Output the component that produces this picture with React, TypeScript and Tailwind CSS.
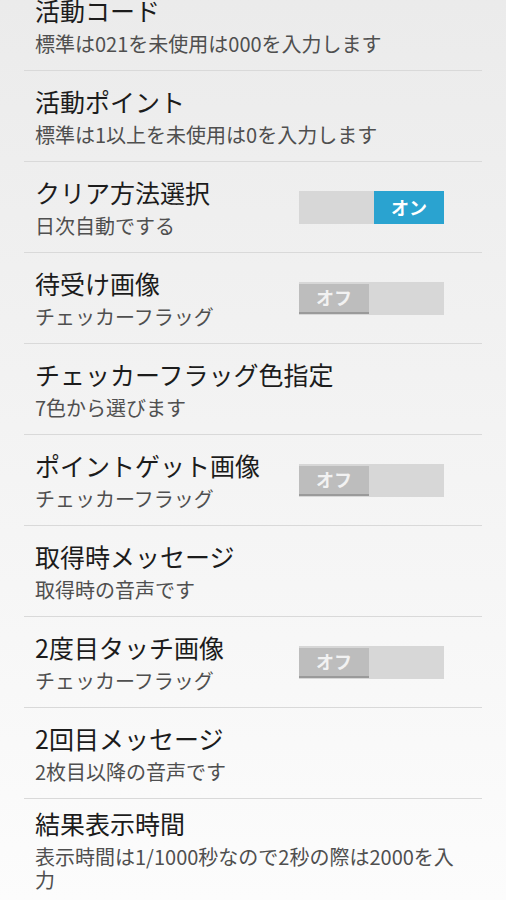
import React from "react";

interface PrefItem {
  title: string;
  summary: string;
  toggle?: boolean;
}

const items: PrefItem[] = [
  { title: "活動コード", summary: "標準は021を未使用は000を入力します" },
  { title: "活動ポイント", summary: "標準は1以上を未使用は0を入力します" },
  { title: "クリア方法選択", summary: "日次自動でする", toggle: true },
  { title: "待受け画像", summary: "チェッカーフラッグ", toggle: false },
  { title: "チェッカーフラッグ色指定", summary: "7色から選びます" },
  { title: "ポイントゲット画像", summary: "チェッカーフラッグ", toggle: false },
  { title: "取得時メッセージ", summary: "取得時の音声です" },
  { title: "2度目タッチ画像", summary: "チェッカーフラッグ", toggle: false },
  { title: "2回目メッセージ", summary: "2枚目以降の音声です" },
  {
    title: "結果表示時間",
    summary: "表示時間は1/1000秒なので2秒の際は2000を入力",
  },
];

const Toggle: React.FC<{ on: boolean }> = ({ on }) => (
  <div className="flex h-[33px] w-[145px] shrink-0 bg-[#d7d7d7]">
    {on ? (
      <>
        <div className="flex-1" />
        <div className="flex w-[70px] items-center justify-center bg-[#2aa3d0] text-[18px] font-bold text-white">
          オン
        </div>
      </>
    ) : (
      <div className="mt-[2px] mb-px flex w-[70px] items-center justify-center border-b-2 border-[#9a9a9a] bg-[#bdbdbd] text-[18px] font-bold text-[#f2f2f2]">
        オフ
      </div>
    )}
  </div>
);

const PrefRow: React.FC<{ item: PrefItem; last: boolean }> = ({ item, last }) => (
  <>
    <div
      className={
        last
          ? "flex items-center pt-[9px] pb-[12px] pl-[35px] pr-[44px]"
          : "flex h-[90px] items-center pt-[15px] pb-[15px] pl-[35px] pr-[44px]"
      }
    >
      <div className="min-w-0 flex-1">
        <div className="text-[25px] leading-[31px] text-[#1c1c1c]">{item.title}</div>
        <div className="mt-[6px] text-[20px] leading-[23px] text-[#4f4f4f]">
          {item.summary}
        </div>
      </div>
      {item.toggle !== undefined && (
        <div className="mr-[18px]">
          <Toggle on={item.toggle} />
        </div>
      )}
    </div>
    {!last && <div className="mx-[24px] h-px bg-[#d9d9d9]" />}
  </>
);

const App: React.FC = () => {
  return (
    <div
      className="h-[900px] w-full overflow-hidden bg-linear-to-b from-[#ebebeb] to-[#fcfcfc]"
      style={{ fontFamily: '"Noto Sans CJK JP", "Noto Sans", sans-serif' }}
    >
      <div className="-mt-[20px]">
        {items.map((item, i) => (
          <PrefRow key={i} item={item} last={i === items.length - 1} />
        ))}
      </div>
    </div>
  );
};

export default App;
